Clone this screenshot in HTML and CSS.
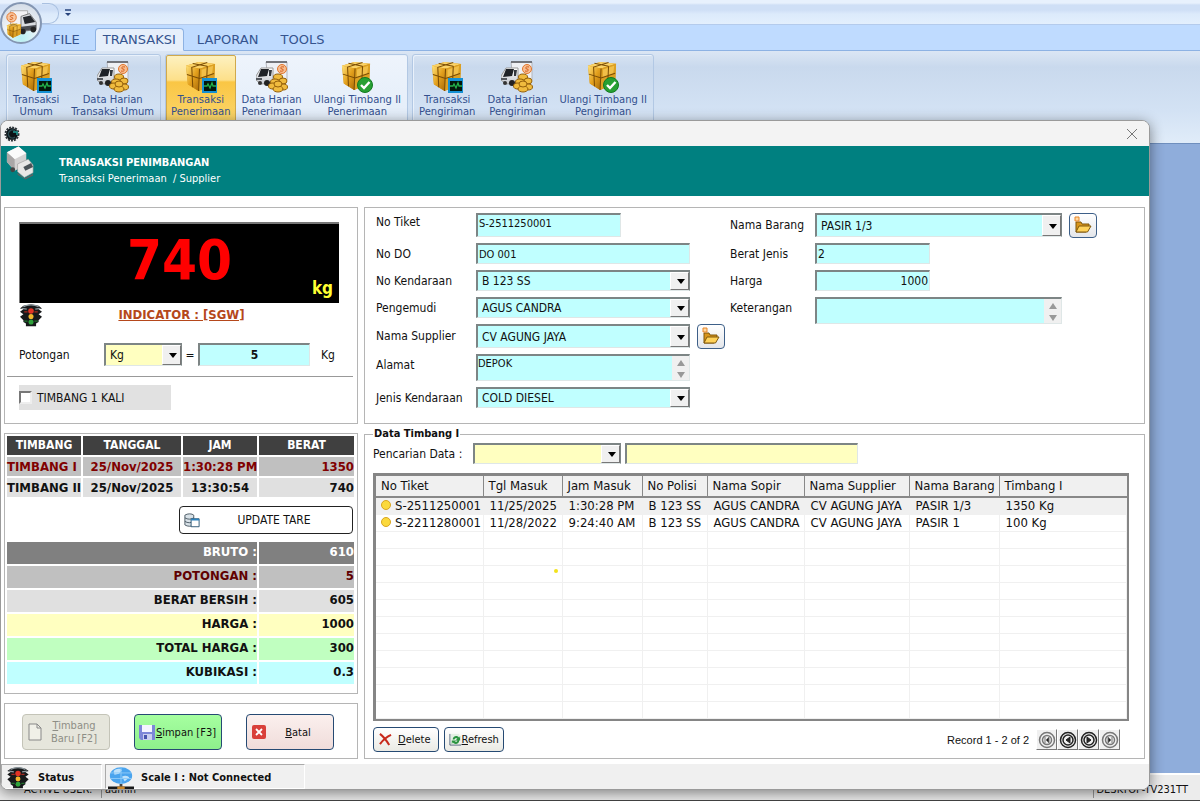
FILE: index.html
```html
<!DOCTYPE html>
<html lang="id">
<head>
<meta charset="utf-8">
<title>Transaksi Penimbangan</title>
<link rel="stylesheet" href="styles.css">
</head>
<body>
<svg class="defs" aria-hidden="true">
  <defs>
    <linearGradient id="gold" x1="0" y1="0" x2="1" y2="1"><stop offset="0" stop-color="#ffe27a"/><stop offset=".5" stop-color="#e3a01d"/><stop offset="1" stop-color="#a96a07"/></linearGradient>
    <linearGradient id="steel" x1="0" y1="0" x2="0" y2="1"><stop offset="0" stop-color="#fff"/><stop offset="1" stop-color="#c4c8cf"/></linearGradient>
    <symbol id="box" viewBox="0 0 32 32">
      <path d="M1 5 14 1 31 3 30 24 14 31 3 24Z" fill="#d18f15"/>
      <path d="M1 5 14 1 31 3 15 8Z" fill="#fbd367"/>
      <path d="M1 5 15 8 14 31 3 24Z" fill="url(#gold)"/>
      <path d="M15 8 31 3 30 24 14 31Z" fill="#dca023"/>
      <path d="M17 9 29 5 28 13 17 17Z" fill="#f1bf48"/>
      <path d="M8 2.500 23 5.500M23 1.500 7 6.500 8 27M2 14 15 18 30 13M15 8 14 31M23 5.500 22 27" fill="none" stroke="#7b4d05" stroke-width="1.100"/>
    </symbol>
    <symbol id="box-scope" viewBox="0 0 32 32">
      <use href="#box" width="31" height="31"/>
      <rect x="17" y="17" width="15" height="15" fill="#1590d3"/><rect x="19" y="20" width="12" height="10" fill="#04170b"/>
      <path d="M19 25h3l1-2 2 4 2-5 1 3h3" fill="none" stroke="#23b24b" stroke-width="1.300"/>
    </symbol>
    <symbol id="box-check" viewBox="0 0 32 32">
      <use href="#box" width="30" height="30"/>
      <circle cx="24" cy="24" r="7.500" fill="#27a033" stroke="#127a20"/><path d="m20 24 3 3 5.500-6" fill="none" stroke="#fff" stroke-width="2.400"/>
    </symbol>
    <symbol id="truck-coins" viewBox="0 0 32 32">
      <path d="M10 1h21v18H12Z" fill="#eef0f4" stroke="#b4b6bc"/><path d="M10 1h21" stroke="#53565c" stroke-width="1.500"/>
      <path d="M5 7h12v15l-12 1-5-4V15Z" fill="url(#steel)" stroke="#999"/><path d="M5 8h8l-2 7-9 1Z" fill="#1f2227"/><path d="M13 9h3l-1 6h-2Z" fill="#33373d"/><path d="M0 17h6v2H0Z" fill="#55595f"/>
      <circle cx="4" cy="22" r="2" fill="#333"/><circle cx="11" cy="22" r="3" fill="#222"/>
      <circle cx="26" cy="8" r="4.500" fill="#f7bf93" stroke="#e2762c"/><path d="M28 6c-4-1-4 2-2 2s2 3-2 2" fill="none" stroke="#d65b16"/>
      <g fill="#f0bb3e" stroke="#94600b"><ellipse cx="22" cy="16" rx="4.500" ry="3"/><ellipse cx="19" cy="21" rx="4.500" ry="3"/><ellipse cx="27" cy="20" rx="4" ry="3"/><ellipse cx="17" cy="25" rx="4.500" ry="3"/><ellipse cx="27" cy="26" rx="4.500" ry="3"/><ellipse cx="22" cy="28" rx="5" ry="3"/><ellipse cx="22" cy="23" rx="4" ry="3"/></g>
    </symbol>
    <symbol id="lights" viewBox="0 0 26 28">
      <path d="M4 2 13 0l9 2 4 3-4 1 4 3-4 3 4 3-4 4v2l-3 2v3H7v-3l-3-2v-2l-4-4 4-3-4-3 4-3-4-1Z" fill="#17191b"/>
      <path d="M2 5 8 6M24 5l-6 1M4 3c5-3 13-3 18 0" stroke="#8d989e" fill="none" stroke-width="1.500"/>
      <circle cx="13" cy="8" r="3.300" fill="#e23325"/><circle cx="13" cy="14.500" r="3" fill="#f3b62c"/><circle cx="13" cy="21" r="3" fill="#2ea33b"/>
      <path d="M5 9h4M17 9h4" stroke="#a62a22" stroke-width="1.500"/><path d="M5 20h4M17 20h4" stroke="#20712d" stroke-width="1.500"/>
    </symbol>
    <symbol id="folder" viewBox="0 0 18 18">
      <path d="M2 6h5l1 2h7v3L12 16H2Z" fill="#d9951b" stroke="#7d5509"/>
      <path d="M5 10h12l-3.500 6H2Z" fill="#ffd25a" stroke="#80590c"/>
      <path d="M1 1h4v4H1Z" fill="#ffd9a0" stroke="#e8862b"/>
    </symbol>
  </defs>
</svg>

<div class="app">
  <header class="quick"><span class="quick-tab"></span>
    <button class="quick-more" aria-label="Kustomisasi"><svg viewBox="0 0 6 8"><path d="M0 1h6" stroke="#26437c" stroke-width="1.500"/><path d="M0 4h6L3 7Z" fill="#26437c"/></svg></button>
  </header>
  <button class="orb" aria-label="Menu utama">
    <svg viewBox="0 0 36 36"><path d="M7 5h18v19H7Z" fill="#f3f3f5" stroke="#aaa"/><path d="m18 11 9-3 7 9v8l-16 2Z" fill="#d9dce0" stroke="#777"/><path d="m20 12 8-2 5 7-11 2Z" fill="#25282d"/><path d="m18 22 16-2v4l-16 3Z" fill="#4a4d52"/><circle cx="20" cy="27" r="3" fill="#222"/><circle cx="31" cy="25" r="3" fill="#222"/><circle cx="8" cy="12" r="5" fill="#f8c7a0" stroke="#e2762c"/><path d="M10 10c-4-1-4 2-2 2s2 3-2 2" stroke="#d65b16" fill="none"/><use href="#box" x="2" y="18" width="17" height="16"/></svg>
  </button>
  <nav class="tabs">
    <a href="#file">FILE</a><a href="#transaksi" class="current">TRANSAKSI</a><a href="#laporan">LAPORAN</a><a href="#tools">TOOLS</a>
  </nav>
  <div class="ribbon">
    <section class="group">
      <button><svg><use href="#box-scope"/></svg>Transaksi<br>Umum</button>
      <button><svg><use href="#truck-coins"/></svg>Data Harian<br>Transaksi Umum</button>
    </section>
    <section class="group lit">
      <button class="hot"><svg><use href="#box-scope"/></svg>Transaksi<br>Penerimaan</button>
      <button><svg><use href="#truck-coins"/></svg>Data Harian<br>Penerimaan</button>
      <button><svg><use href="#box-check"/></svg>Ulangi Timbang II<br>Penerimaan</button>
    </section>
    <section class="group">
      <button><svg><use href="#box-scope"/></svg>Transaksi<br>Pengiriman</button>
      <button><svg><use href="#truck-coins"/></svg>Data Harian<br>Pengiriman</button>
      <button><svg><use href="#box-check"/></svg>Ulangi Timbang II<br>Pengiriman</button>
    </section>
  </div>
  <div class="workspace"></div>
  <footer class="app-status"><span class="user-label">ACTIVE USER:</span><span class="user">admin</span><span class="host">DESKTOP-TV231TT</span></footer>
</div>

<main class="dialog">
  <div class="titlebar">
    <svg class="app-icon" viewBox="0 0 16 16"><circle cx="8" cy="8" r="6" fill="#0c1216"/><circle cx="8" cy="8" r="6.500" fill="none" stroke="#2b3338" stroke-width="2" stroke-dasharray="2 1"/><path d="M11 5a4 4 0 1 0 0 6" fill="none" stroke="#2d4a50" stroke-width="1.500"/><path d="M9 6h4v3" fill="none" stroke="#1f9d96" stroke-width="1.500"/></svg>
    <button class="close" aria-label="Tutup"><svg viewBox="0 0 10 10"><path d="m0 0 10 10M10 0 0 10" stroke="#777"/></svg></button>
  </div>
  <header class="banner">
    <svg viewBox="0 0 32 34"><path d="M3 6 15 0l8 7v12l-12 6L3 16Z" fill="#d4d2d2"/><path d="M3 6 15 0l8 7-12 6Z" fill="#fbfbfb"/><path d="M3 6 11 13v12l-8-9Z" fill="#aaa7a7"/><path d="m14 18 11-5 5 6v8l-9 5-7-6Z" fill="#e9e7e6" stroke="#9a9796" stroke-width=".6"/><path d="m20 21 8-4 2 4-8 4Z" fill="#4c5257"/><path d="m14 27 7 6 9-5v2l-8 4-8-5Z" fill="#636060"/><circle cx="9" cy="24" r="2.500" fill="#444"/></svg>
    <div><h1>TRANSAKSI PENIMBANGAN</h1><p>Transaksi Penerimaan &nbsp;/ Supplier</p></div>
  </header>

  <div class="body">
    <div class="left">
      <section class="panel scale">
        <div class="display"><output>740</output><span>kg</span></div>
        <div class="indicator"><svg><use href="#lights"/></svg><a href="#indicator">INDICATOR : [SGW]</a></div>
        <div class="cut">
          <label for="potongan">Potongan</label>
          <span class="combo yellow"><select id="potongan"><option>Kg</option></select></span>
          <span class="eq">=</span>
          <input class="field" aria-label="Nilai potongan" value="5">
          <span>Kg</span>
        </div>
        <hr>
        <label class="once"><input type="checkbox">TIMBANG 1 KALI</label>
      </section>

      <section class="panel weights">
        <table class="times">
          <colgroup><col class="c1"><col class="c2"><col class="c3"><col></colgroup>
          <thead><tr><th>TIMBANG</th><th>TANGGAL</th><th>JAM</th><th>BERAT</th></tr></thead>
          <tbody>
            <tr class="first"><td>TIMBANG I</td><td>25/Nov/2025</td><td>1:30:28 PM</td><td>1350</td></tr>
            <tr class="second"><td>TIMBANG II</td><td>25/Nov/2025</td><td>13:30:54</td><td>740</td></tr>
          </tbody>
        </table>
        <button class="tare"><svg viewBox="0 0 18 16"><path d="M1 2c3-2 8-2 10 0v11c-2 2-7 2-10 0Z" fill="#d9e2e8" stroke="#44525e"/><path d="M1 5c3 2 7 2 10 0M1 9c3 2 7 2 10 0" fill="none" stroke="#44525e"/><path d="M8 6h9v9H8Z" fill="#fff" stroke="#24506f"/><path d="M8 6h9v2H8Z" fill="#2d83bd"/></svg><span>UPDATE TARE</span></button>
        <table class="sums">
          <colgroup><col><col class="val"></colgroup>
          <tbody>
            <tr class="s1"><th>BRUTO :</th><td>610</td></tr>
            <tr class="s2"><th>POTONGAN :</th><td>5</td></tr>
            <tr class="s3"><th>BERAT BERSIH :</th><td>605</td></tr>
            <tr class="s4"><th>HARGA :</th><td>1000</td></tr>
            <tr class="s5"><th>TOTAL HARGA :</th><td>300</td></tr>
            <tr class="s6"><th>KUBIKASI :</th><td>0.3</td></tr>
          </tbody>
        </table>
      </section>

      <section class="panel actions">
        <button class="new" disabled><svg viewBox="0 0 16 18"><path d="M2 1h8l4 4v12H2Z" fill="#f0f0e8" stroke="#888"/><path d="M10 1v4h4" fill="none" stroke="#888"/></svg><span><u>T</u>imbang<br>Baru [F2]</span></button>
        <button class="save"><svg viewBox="0 0 16 16"><path d="M0 1h16v15H2l-2-2Z" fill="#7c87d8"/><path d="M3 1h10v7H3Z" fill="#f4f5ff"/><path d="M4 10h9v6H4Z" fill="#c9cfee"/><path d="M5 11h3v4H5Z" fill="#4754ad"/></svg><span><u>S</u>impan [F3]</span></button>
        <button class="cancel"><svg viewBox="0 0 16 16"><rect x="1" y="1" width="14" height="14" rx="2" fill="#d9403a"/><path d="m5 5 6 6M11 5l-6 6" stroke="#fff" stroke-width="1.800"/></svg><span><u>B</u>atal</span></button>
      </section>
    </div>

    <div class="right">
      <section class="panel form">
        <div class="fields">
          <div class="row high top"><label for="tiket">No Tiket</label><input id="tiket" class="field short small" value="S-2511250001"></div>
          <div class="row"><label for="do">No DO</label><input id="do" class="field small" value="DO 001"></div>
          <div class="row"><label for="kend">No Kendaraan</label><span class="combo"><select id="kend"><option>B 123 SS</option></select></span></div>
          <div class="row"><label for="sopir">Pengemudi</label><span class="combo"><select id="sopir"><option>AGUS CANDRA</option></select></span></div>
          <div class="row high"><label for="supp">Nama Supplier</label><span class="combo"><select id="supp"><option>CV AGUNG JAYA</option></select></span><button class="open" aria-label="Buka supplier"><svg><use href="#folder"/></svg></button></div>
          <div class="row tall top"><label for="alamat">Alamat</label><span class="memo"><textarea id="alamat" class="small">DEPOK</textarea></span></div>
          <div class="row"><label for="jenis">Jenis Kendaraan</label><span class="combo"><select id="jenis"><option>COLD DIESEL</option></select></span></div>
        </div>
        <div class="fields goods">
          <div class="row high"><label for="barang">Nama Barang</label><span class="combo"><select id="barang"><option>PASIR 1/3</option></select></span><button class="open" aria-label="Buka barang"><svg><use href="#folder"/></svg></button></div>
          <div class="row"><label for="bj">Berat Jenis</label><input id="bj" class="field brief" value="2"></div>
          <div class="row"><label for="harga">Harga</label><input id="harga" class="field brief num" value="1000"></div>
          <div class="row tall top"><label for="ket">Keterangan</label><span class="memo"><textarea id="ket"></textarea></span></div>
        </div>
      </section>

      <fieldset class="data">
        <legend>Data Timbang I</legend>
        <div class="search"><label for="cari">Pencarian Data :</label><span class="combo yellow"><select id="cari"><option></option></select></span><input class="field" aria-label="Kata kunci"></div>
        <div class="list">
          <table>
            <colgroup><col class="w1"><col class="w2"><col class="w3"><col class="w4"><col class="w5"><col class="w6"><col class="w7"><col></colgroup>
            <thead><tr><th>No Tiket</th><th>Tgl Masuk</th><th>Jam Masuk</th><th>No Polisi</th><th>Nama Sopir</th><th>Nama Supplier</th><th>Nama Barang</th><th>Timbang I</th></tr></thead>
            <tbody>
              <tr class="picked"><td><i></i>S-2511250001</td><td>11/25/2025</td><td>1:30:28 PM</td><td>B 123 SS</td><td>AGUS CANDRA</td><td>CV AGUNG JAYA</td><td>PASIR 1/3</td><td>1350 Kg</td></tr>
              <tr><td><i></i>S-2211280001</td><td>11/28/2022</td><td>9:24:40 AM</td><td>B 123 SS</td><td>AGUS CANDRA</td><td>CV AGUNG JAYA</td><td>PASIR 1</td><td>100 Kg</td></tr>
              <tr><td></td><td></td><td></td><td></td><td></td><td></td><td></td><td></td></tr>
              <tr><td></td><td></td><td></td><td></td><td></td><td></td><td></td><td></td></tr>
              <tr><td></td><td></td><td></td><td></td><td></td><td></td><td></td><td></td></tr>
              <tr><td></td><td></td><td></td><td></td><td></td><td></td><td></td><td></td></tr>
              <tr><td></td><td></td><td></td><td></td><td></td><td></td><td></td><td></td></tr>
              <tr><td></td><td></td><td></td><td></td><td></td><td></td><td></td><td></td></tr>
              <tr><td></td><td></td><td></td><td></td><td></td><td></td><td></td><td></td></tr>
              <tr><td></td><td></td><td></td><td></td><td></td><td></td><td></td><td></td></tr>
              <tr><td></td><td></td><td></td><td></td><td></td><td></td><td></td><td></td></tr>
              <tr><td></td><td></td><td></td><td></td><td></td><td></td><td></td><td></td></tr>
              <tr><td></td><td></td><td></td><td></td><td></td><td></td><td></td><td></td></tr>
            </tbody>
          </table>
          <span class="pointer"></span>
        </div>
        <div class="tools">
          <button class="btn"><svg viewBox="0 0 14 14"><path d="M1 1c4 3 7 7 10 12M13 2C8 4 4 8 1 12" fill="none" stroke="#c82a1c" stroke-width="2.200"/></svg><span><u>D</u>elete</span></button>
          <button class="btn tight"><svg viewBox="0 0 14 14"><path d="M1 1v12h12" fill="none" stroke="#4b6078"/><path d="M2 1h9v11H2Z" fill="#e4f0e4"/><path d="M4 7c0-4 5-5 7-2l1-2v5H7l2-2C7 5 6 6 6 7ZM11 8c0 4-5 5-7 2l-1 2V8h5l-2 1c2 1 3 0 3-1Z" fill="#2a9440"/></svg><span><u>R</u>efresh</span></button>
          <span class="record">Record 1 - 2 of 2</span>
          <span class="pager">
            <button aria-label="Pertama" disabled><svg viewBox="0 0 18 18"><circle cx="9" cy="9" r="7.500"/><circle cx="9" cy="9" r="4.500"/><path d="M7 6v6M11 6 8 9l3 3Z"/></svg></button>
            <button aria-label="Sebelumnya"><svg viewBox="0 0 18 18"><circle cx="9" cy="9" r="7.500"/><circle cx="9" cy="9" r="5"/><path d="M11 6 7 9l4 3Z"/></svg></button>
            <button aria-label="Berikutnya"><svg viewBox="0 0 18 18"><circle cx="9" cy="9" r="7.500"/><circle cx="9" cy="9" r="5"/><path d="m7 6 4 3-4 3Z"/></svg></button>
            <button aria-label="Terakhir" disabled><svg viewBox="0 0 18 18"><circle cx="9" cy="9" r="7.500"/><circle cx="9" cy="9" r="4.500"/><path d="M11 6v6M7 6l3 3-3 3Z"/></svg></button>
          </span>
        </div>
      </fieldset>
    </div>
  </div>

  <footer class="status">
    <div class="cell"><svg><use href="#lights"/></svg>Status</div>
    <div class="cell net"><svg viewBox="0 0 28 24"><ellipse cx="14" cy="9" rx="12" ry="9" fill="#4aa4ee"/><path d="M6 4c3-3 7-3 9-1l-3 4-5 1ZM15 10c3-2 7-1 8 1l-5 4Z" fill="#bfe2fb"/><path d="M14 0v18M3 6h22M3 12h22" stroke="#8ccaf8" fill="none"/><path d="M14 18v3" stroke="#444" stroke-width="3"/><path d="M0 22h28" stroke="#181818" stroke-width="3"/><path d="M10 22h8" stroke="#c9862a" stroke-width="3"/></svg>Scale I : Not Connected</div>
  </footer>
</main>
</body>
</html>
```
FILE: styles.css
```css
* { box-sizing: border-box; }
body { margin: 0; height: 100vh; min-height: 801px; position: relative; overflow: hidden; color: #111; font: 12px/16px "DejaVu Sans Condensed", "Noto Sans", sans-serif; }
button, input, select, textarea { font: inherit; color: inherit; margin: 0; }
button { padding: 0; }
svg { display: block; flex: none; }
.defs { position: absolute; width: 0; height: 0; }

/* main window */
.app { height: 100%; display: flex; flex-direction: column; background: #8faddb; }
.quick { height: 25px; padding-left: 42px; display: flex; align-items: flex-start; background: linear-gradient(#e8f1fd 0 3px, #cfdff6 5px 10px, #dceafb 14px, #e3effd); border-bottom: 1px solid #b4cbec; }
.quick-tab { width: 17px; height: 21px; margin-top: 3px; border: 1px solid #a9c0e0; border-left: 0; border-radius: 0 10px 10px 0; }
.quick-more { margin: 9px 0 0 6px; border: 0; background: none; }
.quick-more svg { width: 6px; height: 8px; }
.orb { position: absolute; left: 0; top: 2px; width: 42px; height: 42px; border: 2px solid #8496b2; border-radius: 50%; background: radial-gradient(circle at 50% 90%, #b5f0f2, #eef3f8 45%, #cdd6e2); display: grid; place-items: center; z-index: 1; }
.orb svg { width: 34px; height: 34px; }
.tabs { height: 26px; padding: 3px 0 0 42px; display: flex; background: #bfdbff; border-bottom: 1px solid #8db2e3; font: 13px/22px "DejaVu Sans", sans-serif; }
.tabs a { height: 23px; padding: 0 10px; border: 1px solid transparent; color: #35548f; text-decoration: none; }
.tabs .current { margin: 0 2px 0 4px; padding: 0 7px; background: #e6effb; border-color: #8db2e3; border-bottom-color: #e6effb; border-radius: 4px 4px 0 0; }
.ribbon { height: 93px; padding: 3px 6px; display: flex; background: linear-gradient(#dbe6f4, #c9d9ed 16px, #d3e2f4 60px, #e0ecf9); border-bottom: 1px solid #6f8fbe; }
.group { display: flex; align-items: flex-start; margin-right: 4px; border: 1px solid #b2c8e4; border-radius: 3px; box-shadow: inset 1px 1px #e9f1fb; }
.group.lit { background: linear-gradient(#eef4fc, #e0ebf8); }
.group button { height: 72px; padding: 4px 6px 8px; border: 0; background: none; color: #33508e; font: 10px/12px "DejaVu Sans", sans-serif; text-align: center; white-space: nowrap; }
.group svg { width: 32px; height: 32px; margin: 0 auto 1px; }
.group .hot { background: linear-gradient(#fdf1c0, #fde08a 24px, #fac644 26px, #fbd870); border: 1px solid #d0a94c; border-radius: 2px; padding: 3px 4px 7px; }
.workspace { flex: 1; }
.app-status { height: 28px; display: flex; align-items: flex-end; padding: 0 12px 2px 24px; background: #ececec; border-top: 2px solid #fff; border-bottom: 1px solid #444; font-size: 11px; }
.user-label { width: 78px; border-right: 1px solid #999; }
.user { padding-left: 3px; }
.host { margin-left: auto; padding-left: 3px; border-left: 1px solid #999; }

/* dialog */
.dialog { position: absolute; left: 0; right: 50px; top: 120px; bottom: 11px; display: flex; flex-direction: column; background: #fff; border: 1px solid #9a9a9a; border-radius: 8px; overflow: hidden; box-shadow: 0 3px 14px #0007; }
.titlebar { height: 25px; padding: 0 12px 0 3px; display: flex; align-items: center; justify-content: space-between; background: #f3f3f3; }
.app-icon { width: 16px; height: 16px; }
.close { border: 0; background: none; }
.close svg { width: 10px; height: 10px; }
.banner { height: 50px; display: flex; align-items: flex-start; background: #008080; color: #fff; }
.banner svg { width: 31px; height: 34px; margin: 0 24px 0 3px; }
.banner h1 { margin: 9px 0 0; font-size: 11px; line-height: 16px; }
.banner p { margin: 0; font-size: 11px; line-height: 16px; }
.body { flex: 1; padding: 11px 4px 5px 3px; display: grid; grid-template-columns: 354px minmax(0, 1fr); gap: 6px; }
.left { display: flex; flex-direction: column; gap: 9px; }
.right { display: flex; flex-direction: column; gap: 3px; min-width: 0; }
.panel { border: 1px solid #b5b5b5; }

.scale { height: 217px; padding: 14px 4px 0 2px; }
.display { height: 81px; margin: 0 14px 0 12px; display: grid; grid-template-columns: 1fr auto 1fr; background: #000; border: 2px solid #777; border-width: 2px 0 0 1px; color: #f00; font-weight: bold; }
.display output { grid-column: 2; font-size: 56px; line-height: 72px; }
.display span { align-self: end; justify-self: end; padding: 0 6px 5px 0; color: #ff3; font-size: 17px; line-height: 20px; }
.indicator { display: grid; grid-template-columns: 22px 1fr 32px; padding-left: 13px; height: 40px; }
.indicator svg { width: 22px; height: 26px; }
.indicator a { justify-self: center; padding-top: 4px; color: #b5481b; font-size: 13px; font-weight: bold; }
.cut { display: flex; align-items: center; height: 23px; padding-left: 12px; }
.cut label { width: 85px; }
.cut .combo { width: 78px; flex: none; }
.cut .eq { width: 16px; text-align: center; }
.cut .field { width: 112px; margin-right: 11px; flex: none; text-align: center; font-weight: bold; }
hr { margin: 10px 0 8px; border: 0; border-top: 1px solid #999; }
.once { display: flex; align-items: center; gap: 5px; width: 152px; height: 25px; margin-left: 12px; background: #e1e1e1; }
.once input { appearance: none; width: 13px; height: 13px; background: #fff; border: 2px solid; border-color: #777 #eee #eee #777; }

.field, .combo, .memo { height: 100%; min-width: 0; background: #c0ffff; border: 2px solid; border-color: #7d8585 #dfe7e7 #dfe7e7 #7d8585; border-right-width: 1px; border-bottom-width: 1px; border-radius: 0; outline: 0; }
.field { flex: 1; padding: 0 1px; }
.small { font-size: 11px; }
.num { text-align: right; }
.combo { flex: 1; position: relative; display: flex; border-right-color: #7d8585; }
.combo select { flex: 1; min-width: 0; padding: 0 17px 0 4px; appearance: none; border: 0; border-radius: 0; outline: 0; background: none; }
.combo::before { content: ""; position: absolute; right: 0; top: 0; bottom: 0; width: 17px; background: #f0f0f0; border: 1px solid; border-color: #fff #777 #777 #fff; pointer-events: none; }
.combo::after { content: ""; position: absolute; right: 4px; top: calc(50% - 2px); border: 4px solid transparent; border-top: 5px solid #000; border-bottom: 0; pointer-events: none; }
.yellow, .search .field { background: #ffffc0; }
.memo { flex: 1; position: relative; display: flex; background: linear-gradient(#f0f0f0, #f0f0f0) right / 17px 100% no-repeat #c0ffff; }
.memo textarea { flex: 1; min-width: 0; padding: 0; resize: none; overflow: hidden; border: 0; outline: 0; background: none; }
.memo::before, .memo::after { content: ""; position: absolute; right: 4px; border: 4px solid transparent; }
.memo::before { top: 4px; border-bottom: 6px solid #999; border-top: 0; }
.memo::after { bottom: 2px; border-top: 6px solid #999; border-bottom: 0; }

.weights { height: 261px; padding: 0 2px; }
table { width: 100%; table-layout: fixed; border-collapse: collapse; }
.times, .sums { border-collapse: separate; border-spacing: 2px; margin: 0 -2px; width: calc(100% + 3px); font-size: 13px; font-weight: bold; }
.times .c1 { width: 74px; } .times .c2 { width: 98px; } .times .c3 { width: 74px; }
.times th, .times td { height: 19px; padding: 0; line-height: 17px; text-align: center; white-space: nowrap; }
.times th { background: #404040; color: #fff; font-size: 12px; }
.times td:first-child { text-align: left; }
.times td:last-child, .sums th, .sums td { text-align: right; }
.first td { background: #c0c0c0; color: #800000; }
.second td { background: #e0e0e0; }
.tare { display: flex; align-items: center; width: 174px; height: 28px; margin: 7px 2px 6px auto; padding: 0 4px; border: 1px solid #222; border-radius: 4px; background: #fff; font-size: 12px; }
.tare svg { width: 16px; height: 15px; }
.tare span, .actions span { flex: 1; text-align: center; }
.sums .val { width: 95px; }
.sums th, .sums td { height: 22px; padding: 0; line-height: 19px; vertical-align: top; }
.s1 > * { background: #808080; color: #fff; }
.s2 > * { background: #c0c0c0; color: #600000; }
.s3 > * { background: #e0e0e0; }
.s4 > * { background: #ffffc0; }
.s5 > * { background: #c0ffc0; }
.s6 > * { background: #c0ffff; }

.actions { flex: 1; display: flex; align-items: center; gap: 24px; padding: 2px 17px 0; }
.actions button { width: 88px; height: 36px; padding: 0 4px; display: flex; align-items: center; border: 1px solid #264a73; border-radius: 4px; font-size: 11px; line-height: 13px; white-space: nowrap; }
.actions svg { width: 16px; height: 18px; }
.actions .new { background: #e6e6dc; border-color: #c4c4b8; color: #8e8e86; }
.actions .save { background: linear-gradient(#a6ffa0, #8ef08c); }
.actions .cancel { background: linear-gradient(#fbf0ee, #f0dcda); }

.form { height: 217px; padding: 5px 11px; display: grid; grid-template-columns: 354px minmax(0, 1fr); }
.fields { display: flex; flex-direction: column; gap: 6px; }
.row { height: 21px; display: flex; align-items: center; padding-right: 40px; }
.row label { width: 100px; flex: none; }
.high { height: 24px; }
.tall { height: 27px; }
.top label { align-self: flex-start; line-height: 19px; }
.tall label { line-height: 23px; }
.row .short { flex: none; width: 145px; padding-bottom: 4px; }
.open { width: 28px; height: 25px; margin: 0 -35px 0 7px; display: grid; place-items: center; flex: none; background: linear-gradient(#fff, #e4e6ea); border: 1px solid #3d5f88; border-radius: 4px; }
.open svg { width: 18px; height: 18px; }
.goods label { width: 85px; }
.goods .row { padding-right: 71px; }
.row .brief { flex: none; width: 115px; }

.data { flex: 1; margin: 0; padding: 2px 15px 0 8px; min-width: 0; border: 1px solid #b5b5b5; display: flex; flex-direction: column; }
legend { padding: 0 1px; font-weight: bold; font-size: 11px; line-height: 14px; }
.search { height: 21px; display: flex; align-items: center; gap: 4px; }
.search label { width: 96px; }
.search .combo { flex: none; width: 148px; }
.search .field { flex: none; width: 233px; }
.list { position: relative; margin-top: 9px; border: 3px solid #858585; border-width: 3px 2px 2px 3px; background: #fff; font-size: 13px; }
.list .w1 { width: 107px; } .list .w2 { width: 79px; } .list .w3 { width: 80px; } .list .w4 { width: 65px; } .list .w5 { width: 97px; } .list .w6 { width: 105px; } .list .w7 { width: 90px; }
.list th { height: 21px; padding: 0 0 0 5px; background: #f0f0f0; border-right: 1px solid #888; border-bottom: 2px solid #888; font-weight: normal; text-align: left; white-space: nowrap; }
.list th:last-child { border-right: 0; }
.list td { height: 17px; padding: 0 0 0 6px; line-height: 16px; border: 1px solid #f0f0f0; border-width: 0 1px 1px 0; white-space: nowrap; }
.list i { display: inline-block; width: 10px; height: 10px; margin: 0 4px 0 -1px; border: 1px solid #d9a520; border-radius: 50%; background: #fbd93c; }
.picked td { background: #f0f0f0; }
.pointer { position: absolute; left: 178px; top: 93px; width: 4px; height: 4px; border-radius: 50%; background: #f2e21c; }
.tools { flex: 1; display: flex; align-items: center; gap: 5px; padding-right: 9px; }
.btn { height: 25px; padding: 0 7px 0 5px; display: flex; align-items: center; gap: 6px; border: 1px solid #264a73; border-radius: 4px; background: linear-gradient(#fff, #eaeae4); font-size: 11px; }
.btn svg { width: 13px; height: 13px; }
.tight { gap: 0; padding: 0 4px; }
.record { margin-left: auto; font: 11px/16px "Liberation Sans", sans-serif; }
.pager { display: flex; margin-left: 2px; }
.pager button { width: 21px; height: 21px; padding: 0; display: grid; place-items: center; background: #f0f0f0; border: 1px solid; border-color: #fff #777 #777 #fff; }
.pager svg { width: 18px; height: 18px; fill: none; stroke: #222; stroke-width: 1.5; }
.pager path { fill: #222; stroke-width: 1; }
.pager :disabled svg { stroke: #777; }

.status { height: 25px; display: flex; gap: 3px; background: #f0f0f0; font-weight: bold; font-size: 11px; }
.cell { width: 101px; display: flex; align-items: center; gap: 7px; padding: 3px 0 0 3px; border: 1px solid; border-color: #aaa #fff #fff #aaa; }
.cell svg { width: 26px; height: 23px; }
.net { width: 200px; padding-left: 2px; }
```
